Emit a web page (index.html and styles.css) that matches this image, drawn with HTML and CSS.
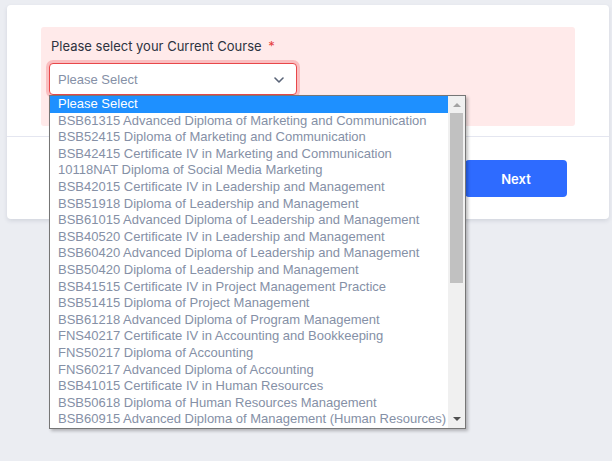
FILE: index.html
```html
<!DOCTYPE html>
<html lang="en">
<head>
    <meta charset="UTF-8">
    <meta name="viewport" content="width=device-width, initial-scale=1.0">
    <title>Enrolment - Current Course</title>
    <link rel="stylesheet" href="styles.css">
</head>
<body>
    <div class="card">
        <div class="card-body">
            <div class="form-group has-error">
                <label class="field-label">Please select your Current Course <span class="required">*</span></label>
                <div class="select-wrap">
                    <div class="select-box">
                        <span>Please Select</span>
                        <svg class="chevron" width="10" height="6" viewBox="0 0 10 6"><path d="M1 1l4 4 4-4" fill="none" stroke="#5a6478" stroke-width="1.6" stroke-linecap="round" stroke-linejoin="round"/></svg>
                    </div>
                    <div class="option-list">
                        <ul class="options">
                            <li class="selected">Please Select</li>
                            <li>BSB61315 Advanced Diploma of Marketing and Communication</li>
                            <li>BSB52415 Diploma of Marketing and Communication</li>
                            <li>BSB42415 Certificate IV in Marketing and Communication</li>
                            <li>10118NAT Diploma of Social Media Marketing</li>
                            <li>BSB42015 Certificate IV in Leadership and Management</li>
                            <li>BSB51918 Diploma of Leadership and Management</li>
                            <li>BSB61015 Advanced Diploma of Leadership and Management</li>
                            <li>BSB40520 Certificate IV in Leadership and Management</li>
                            <li>BSB60420 Advanced Diploma of Leadership and Management</li>
                            <li>BSB50420 Diploma of Leadership and Management</li>
                            <li>BSB41515 Certificate IV in Project Management Practice</li>
                            <li>BSB51415 Diploma of Project Management</li>
                            <li>BSB61218 Advanced Diploma of Program Management</li>
                            <li>FNS40217 Certificate IV in Accounting and Bookkeeping</li>
                            <li>FNS50217 Diploma of Accounting</li>
                            <li>FNS60217 Advanced Diploma of Accounting</li>
                            <li>BSB41015 Certificate IV in Human Resources</li>
                            <li>BSB50618 Diploma of Human Resources Management</li>
                            <li>BSB60915 Advanced Diploma of Management (Human Resources)</li>
                        </ul>
                        <div class="scrollbar">
                            <div class="arrow arrow-up"></div>
                            <div class="track"><div class="thumb"></div></div>
                            <div class="arrow arrow-down"></div>
                        </div>
                    </div>
                </div>
            </div>
        </div>
        <div class="card-footer">
            <button type="button" class="next-btn">Next</button>
        </div>
    </div>
</body>
</html>
```

FILE: styles.css
```css
body {
    margin: 0;
    background-color: #ebedf2;
    font-family: "Liberation Sans", Arial, sans-serif;
    height: 461px;
    overflow: hidden;
}

.card {
    margin: 5px 3px 0 7px;
    background: white;
    border-radius: 4px;
    box-shadow: 0 2px 4px rgba(40, 50, 80, 0.12);
}

.card-body {
    padding: 22px 34px 10px;
}

.form-group {
    background-color: #ffeaea;
    border-radius: 3px;
    padding: 11px 8px 31px;
}

.field-label {
    display: block;
    padding-left: 2px;
    font-family: Inter, "Liberation Sans", sans-serif;
    font-size: 13px;
    line-height: 16px;
    color: #2d3340;
    margin-bottom: 9px;
}

.required {
    color: #e53e3e;
    margin-left: 3px;
}

.select-wrap {
    position: relative;
    width: 248px;
}

.select-box {
    height: 30px;
    border: 1px solid #e8474a;
    border-radius: 4px;
    box-shadow: 0 0 0 3px rgba(240, 110, 115, 0.35);
    background: white;
    display: flex;
    align-items: center;
    justify-content: space-between;
    padding: 0 12px 0 8px;
    font-size: 13px;
    color: #8590a6;
}

.chevron {
    margin-top: 1px;
}

.option-list {
    position: absolute;
    top: 32px;
    left: 0;
    width: 415px;
    border: 1px solid #767676;
    background: white;
    display: flex;
    box-shadow: 2px 2px 3px rgba(0, 0, 0, 0.25);
    z-index: 10;
}

.options {
    list-style: none;
    margin: 0;
    padding: 0;
    flex: 1;
}

.options li {
    font-size: 13px;
    line-height: 16.6px;
    padding-left: 8px;
    color: #8590a6;
    white-space: nowrap;
}

.options li.selected {
    background-color: #1e90ff;
    color: white;
}

.scrollbar {
    width: 17px;
    background-color: #f0f0f0;
    display: flex;
    flex-direction: column;
}

.arrow {
    height: 17px;
    display: flex;
    align-items: center;
    justify-content: center;
}

.arrow::before {
    content: "";
    border-left: 4px solid transparent;
    border-right: 4px solid transparent;
}

.arrow-up::before {
    border-bottom: 4px solid #a3a3a3;
}

.arrow-down::before {
    border-top: 4px solid #505050;
}

.track {
    flex: 1;
    padding: 0 2px;
}

.thumb {
    height: 170px;
    background-color: #c1c1c1;
}

.card-footer {
    border-top: 1px solid #e4e6f0;
    padding: 23px 42px 22px;
    display: flex;
    justify-content: flex-end;
}

.next-btn {
    width: 102px;
    height: 37px;
    border: none;
    border-radius: 4px;
    background-color: #2e6bff;
    color: white;
    font-family: Inter, "Liberation Sans", sans-serif;
    font-size: 13px;
    font-weight: 600;
    cursor: pointer;
}
```
